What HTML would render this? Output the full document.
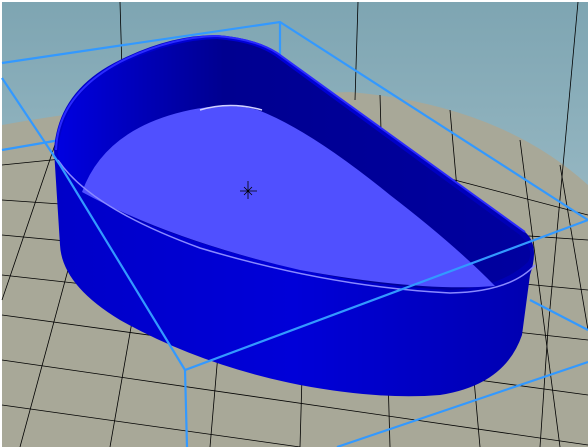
<!DOCTYPE html>
<html><head><style>html,body{margin:0;padding:0;width:588px;height:447px;overflow:hidden;background:#fff}</style></head>
<body>
<svg width="588" height="447" viewBox="0 0 588 447" xmlns="http://www.w3.org/2000/svg">
<defs>
<linearGradient id="sky" x1="0" y1="0" x2="0" y2="1"><stop offset="0" stop-color="#7ea5b2"/><stop offset="1" stop-color="#b3cdd6"/></linearGradient>
<linearGradient id="wall" x1="0" y1="0" x2="1" y2="0"><stop offset="0" stop-color="#0000c8"/><stop offset="0.5" stop-color="#0000d8"/><stop offset="1" stop-color="#0000b0"/></linearGradient>
<linearGradient id="inner" x1="0" y1="0" x2="1" y2="0"><stop offset="0" stop-color="#0000e0"/><stop offset="0.35" stop-color="#000090"/><stop offset="1" stop-color="#0000a0"/></linearGradient>
</defs>
<rect x="2" y="2" width="586" height="443" fill="url(#sky)"/>
<path d="M2 125 Q150 98 350 92 Q500 105 588 185 L588 447 L2 447 Z" fill="#a8a898"/>
<g stroke="#000" stroke-width="0.8" fill="none">
<path d="M2 165 L200 145 M2 200 L588 240 M2 235 L588 290 M2 275 L588 340 M2 315 L588 395 M2 360 L588 445 M2 405 L300 447 M150 100 L588 215"/>
<path d="M60 130 L2 300 M110 115 L20 447 M170 105 L110 447 M240 98 L210 447 M310 94 L300 447 M380 95 L390 447 M450 110 L480 447 M520 140 L560 447 M560 165 L588 330"/>
<path d="M120 2 L122 70 M358 2 L355 100 M578 2 L548 330 M548 330 L540 447"/>
</g>
<g stroke="#3399ff" stroke-width="2.2" fill="none">
<path d="M2 63 L280 22 L588 220"/>
<path d="M280 22 L280 95"/>
<path d="M2 150 L60 140"/>
</g>
<path d="M54 150 Q58 90 120 60 Q170 35 217 35 Q255 38 277 52 L525 232 Q540 245 530 275 L522 335 Q505 385 440 395 Q380 400 300 385 Q200 365 120 320 Q62 285 60 245 Z" fill="url(#wall)"/>
<path d="M58 155 Q60 95 120 65 Q170 40 217 39 Q255 42 275 56 L520 235 Q535 250 528 262 Q500 288 450 290 Q300 282 150 225 Q70 195 58 155 Z" fill="url(#inner)"/>
<path d="M82 192 Q105 128 190 110 Q230 102 258 110 Q310 130 390 195 Q455 245 495 286 Q420 292 300 270 Q170 240 82 192 Z" fill="#5050ff"/>
<path d="M200 110 Q230 101 262 110" stroke="#d0d0ff" stroke-width="1.5" fill="none"/>
<path d="M58 160 Q90 208 200 248 Q330 287 450 293 Q510 292 535 265" stroke="#8a8aff" stroke-width="1.5" fill="none"/>
<path d="M56 150 Q58 95 120 62 Q170 37 217 36 Q255 39 277 53 L525 232" stroke="#2a2aff" stroke-width="2" fill="none"/>
<g stroke="#000" stroke-width="0.8"><path d="M240 191 L257 191 M248 181 L248 199 M244 187 L252 195 M252 187 L244 195"/></g>
<g stroke="#3399ff" stroke-width="2.2" fill="none">
<path d="M2 78 L60 165 L185 370 L588 220"/>
<path d="M185 370 L187 447"/>
<path d="M337 447 L588 362"/>
<path d="M530 300 L588 330"/>
</g>
</svg>
</body></html>
